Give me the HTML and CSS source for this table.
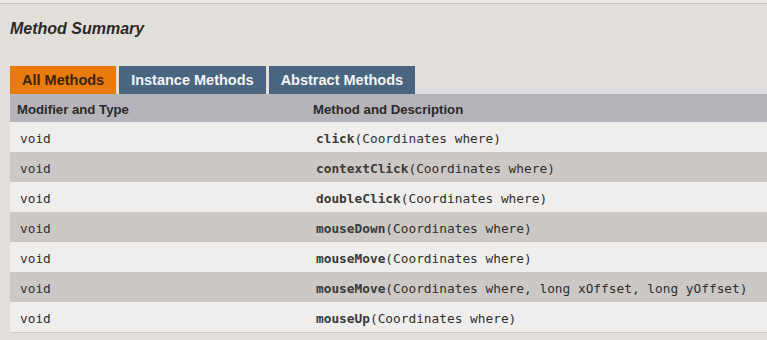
FILE: index.html
```html
<!DOCTYPE html>
<html>
<head>
<meta charset="utf-8">
<link rel="stylesheet" href="styles.css">
</head>
<body>
<div class="topline"></div>
<div class="summary">
  <h3 class="title">Method Summary</h3>
  <div class="tabs">
    <span class="tab active">All Methods</span>
    <span class="tab">Instance Methods</span>
    <span class="tab">Abstract Methods</span>
    <span class="tabfill"></span>
  </div>
  <div class="table">
    <div class="row head"><div class="c1">Modifier and Type</div><div class="c2">Method and Description</div></div>
    <div class="row"><div class="c1 code">void</div><div class="c2 code"><b>click</b>(Coordinates where)</div></div>
    <div class="row alt"><div class="c1 code">void</div><div class="c2 code"><b>contextClick</b>(Coordinates where)</div></div>
    <div class="row"><div class="c1 code">void</div><div class="c2 code"><b>doubleClick</b>(Coordinates where)</div></div>
    <div class="row alt"><div class="c1 code">void</div><div class="c2 code"><b>mouseDown</b>(Coordinates where)</div></div>
    <div class="row"><div class="c1 code">void</div><div class="c2 code"><b>mouseMove</b>(Coordinates where)</div></div>
    <div class="row alt"><div class="c1 code">void</div><div class="c2 code"><b>mouseMove</b>(Coordinates where, long xOffset, long yOffset)</div></div>
    <div class="row"><div class="c1 code">void</div><div class="c2 code"><b>mouseUp</b>(Coordinates where)</div></div>
  </div>
</div>
</body>
</html>
```
FILE: styles.css
```css
html, body {
  margin: 0;
  padding: 0;
  background: #e2dfdb;
  font-family: "Liberation Sans", Arial, sans-serif;
  color: #2d2d2b;
}
.topline {
  height: 3px;
  background: #ebe9e6;
  border-bottom: 1px solid #c9c6c2;
}
.summary {
  padding-left: 10px;
}
.title {
  margin: 0;
  padding-top: 15px;
  height: 47px;
  box-sizing: content-box;
  font-size: 16px;
  font-style: italic;
  font-weight: bold;
  line-height: 20px;
  color: #2b2a28;
}
.tabs {
  display: flex;
  align-items: flex-end;
  height: 28px;
}
.tab {
  height: 28px;
  line-height: 29px;
  padding: 0 12px;
  margin-right: 3px;
  background: #4a6580;
  color: #f4f4f4;
  font-size: 14.5px;
  font-weight: bold;
}
.tab.active {
  background: #e87b0b;
  color: #3a2410;
}
.tabfill {
  flex: 1;
  height: 5px;
  margin-left: -3px;
  background: #dcdae2;
}
.row {
  display: grid;
  grid-template-columns: 296px 1fr;
  height: 30px;
  box-sizing: border-box;
  padding-top: 3px;
  align-items: center;
  background: #efeeec;
}
.row.alt {
  background: #ccc8c5;
}
.row.head {
  height: 28px;
  padding-top: 2px;
  background: #b5b4ba;
  font-size: 13.2px;
  font-weight: bold;
  color: #2b2a28;
}
.row.head .c1 { padding-left: 7px; }
.row.head .c2 { padding-left: 7px; }
.c1.code { padding-left: 10px; }
.c2.code { padding-left: 10px; }
.code {
  font-family: "DejaVu Sans Mono", "Liberation Mono", monospace;
  font-size: 12.8px;
  color: #2f2f2d;
}
.code b {
  font-weight: bold;
  color: #3a3a38;
}
.table {
  border-bottom: 1px solid #cfccc8;
}
```
